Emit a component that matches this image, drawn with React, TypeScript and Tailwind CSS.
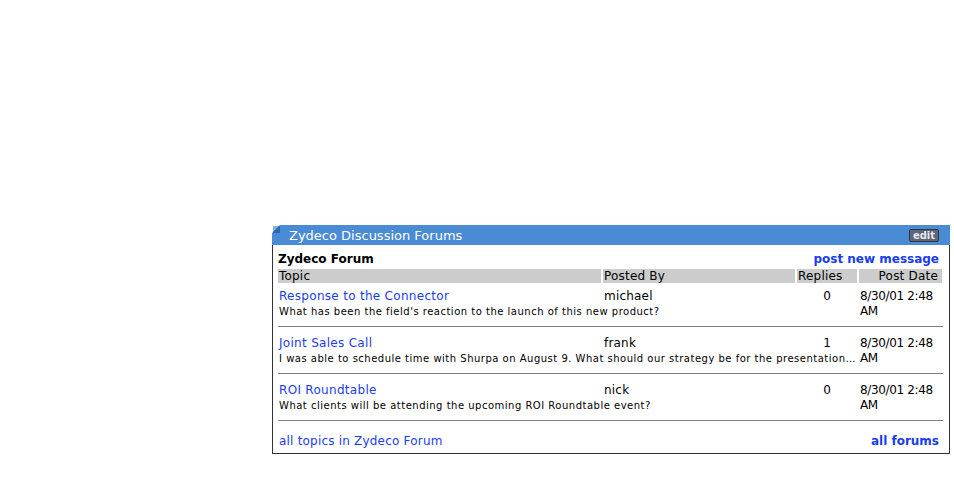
import React from 'react';

type Topic = {
    title: string;
    author: string;
    replies: number;
    summary: string;
    date: string;
    time: string;
};

const topics: Topic[] = [
    {
        title: 'Response to the Connector',
        author: 'michael',
        replies: 0,
        summary: "What has been the field's reaction to the launch of this new product?",
        date: '8/30/01 2:48',
        time: 'AM',
    },
    {
        title: 'Joint Sales Call',
        author: 'frank',
        replies: 1,
        summary: 'I was able to schedule time with Shurpa on August 9. What should our strategy be for the presentation with the client next week?',
        date: '8/30/01 2:48',
        time: 'AM',
    },
    {
        title: 'ROI Roundtable',
        author: 'nick',
        replies: 0,
        summary: 'What clients will be attending the upcoming ROI Roundtable event?',
        date: '8/30/01 2:48',
        time: 'AM',
    },
];

const cols = 'grid grid-cols-[323px_192px_60px_83px] gap-x-[2px]';

const CornerMark: React.FC = () => (
    <svg width="8" height="8" viewBox="0 0 8 8" className="block">
        <rect x="0" y="0" width="8" height="8" fill="#7fb0ea" />
        <path d="M0 8 L8 0 L8 8 Z" fill="#2f67b4" />
        <path d="M0.5 7.5 L0.5 0.5 L7.5 0.5" stroke="#ffffff" strokeWidth="1" fill="none" />
    </svg>
);

const TopicRow: React.FC<{ topic: Topic; first: boolean }> = ({ topic, first }) => (
    <div className={first ? 'mt-[6px]' : 'mt-[9px]'}>
        <div className={`${cols} leading-[15px]`}>
            <a href="#" className="px-[1px] text-[#1a3cf0] whitespace-nowrap tracking-[0.3px]">{topic.title}</a>
            <span className="px-[1px] tracking-[0.2px]">{topic.author}</span>
            <span className="text-center">{topic.replies}</span>
            <span className="row-span-2 pl-[1px] whitespace-nowrap tracking-[-0.35px]">
                {topic.date}
                <br />
                {topic.time}
            </span>
            <p className="col-span-3 px-[1px] text-[10px] tracking-[0.5px] truncate">{topic.summary}</p>
        </div>
        <div className="mt-[7px] h-px bg-[#808080]" />
    </div>
);

export default function App() {
    return (
        <div className="min-h-screen bg-white pt-[225px] pl-[272px] text-[12px] text-black font-['DejaVu_Sans',Verdana,sans-serif]">
            <div className="w-[678px]">
                <header className="flex items-center h-[20px] bg-[#4a8bd6] relative">
                    <div className="absolute left-0 top-0">
                        <CornerMark />
                    </div>
                    <h3 className="pl-[17px] pt-[1px] text-[13px] text-white leading-[20px]">Zydeco Discussion Forums</h3>
                    <button className="ml-auto mr-[11px] w-[30px] h-[13px] rounded-[2px] border border-[#2e3440] bg-[#5d6679] text-[10px] leading-[11px] font-bold text-[#e8e8e8]">
                        edit
                    </button>
                </header>
                <div className="border-x border-b border-[#333333] pt-[7px] pb-[4px] pl-[5px] pr-[6px]">
                    <div className="flex justify-between leading-[15px]">
                        <b>Zydeco Forum</b>
                        <a href="#" className="pr-[4px] font-bold text-[#1a3cf0]">post new message</a>
                    </div>
                    <div className={`${cols} mt-[2px] leading-[14px] tracking-[0.2px]`}>
                        <span className="bg-[#cccccc] px-[1px]">Topic</span>
                        <span className="bg-[#cccccc] px-[1px]">Posted By</span>
                        <span className="bg-[#cccccc] px-[1px]">Replies</span>
                        <span className="bg-[#cccccc] pr-[4px] text-right">Post Date</span>
                    </div>
                    {topics.map((t, i) => (
                        <TopicRow key={t.title} topic={t} first={i === 0} />
                    ))}
                    <div className="mt-[13px] flex justify-between leading-[15px]">
                        <a href="#" className="px-[1px] text-[#1a3cf0] tracking-[0.2px]">all topics in Zydeco Forum</a>
                        <a href="#" className="pr-[4px] font-bold text-[#1a3cf0]">all forums</a>
                    </div>
                </div>
            </div>
        </div>
    );
}
